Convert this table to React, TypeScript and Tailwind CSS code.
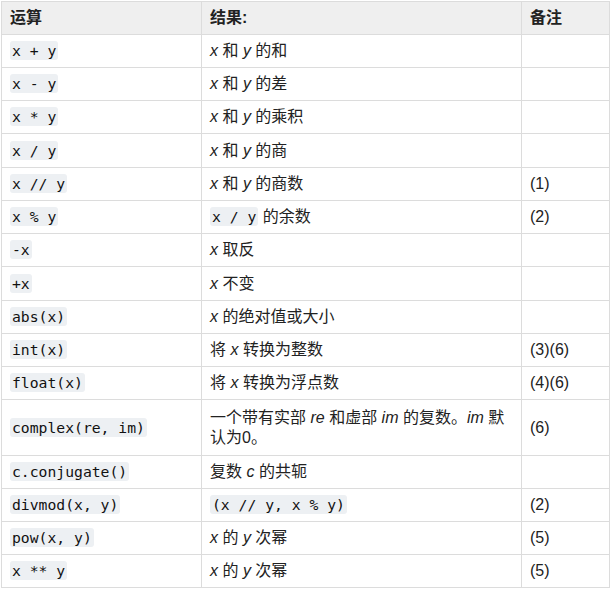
import React from "react";

const C = ({ children }: { children: React.ReactNode }) => (
  <code
    className="bg-[#edf0f3] rounded-[3px] px-[2px] py-px text-[14.72px] text-[#111]"
    style={{ fontFamily: '"DejaVu Sans Mono", monospace' }}
  >
    {children}
  </code>
);

const I = ({ children }: { children: React.ReactNode }) => <i>{children}</i>;

type Row = { op: React.ReactNode; res: React.ReactNode; note?: string; h?: string };

const rows: Row[] = [
  { op: <C>x + y</C>, res: <><I>x</I> 和 <I>y</I> 的和</> },
  { op: <C>x - y</C>, res: <><I>x</I> 和 <I>y</I> 的差</> },
  { op: <C>x * y</C>, res: <><I>x</I> 和 <I>y</I> 的乘积</> },
  { op: <C>x / y</C>, res: <><I>x</I> 和 <I>y</I> 的商</>, h: "h-[33px]" },
  { op: <C>x // y</C>, res: <><I>x</I> 和 <I>y</I> 的商数</>, note: "(1)" },
  { op: <C>x % y</C>, res: <><C>x / y</C> 的余数</>, note: "(2)" },
  { op: <C>-x</C>, res: <><I>x</I> 取反</> },
  { op: <C>+x</C>, res: <><I>x</I> 不变</>, h: "h-[33px]" },
  { op: <C>abs(x)</C>, res: <><I>x</I> 的绝对值或大小</> },
  { op: <C>int(x)</C>, res: <>将 <I>x</I> 转换为整数</>, note: "(3)(6)" },
  { op: <C>float(x)</C>, res: <>将 <I>x</I> 转换为浮点数</>, note: "(4)(6)" },
  {
    op: <C>complex(re, im)</C>,
    res: (
      <>
        一个带有实部 <I>re</I> 和虚部 <I>im</I> 的复数。<I>im</I> 默
        <br />
        认为0。
      </>
    ),
    note: "(6)",
    h: "h-[55px]",
  },
  { op: <C>c.conjugate()</C>, res: <>复数 <I>c</I> 的共轭</> },
  { op: <C>divmod(x, y)</C>, res: <C>(x // y, x % y)</C>, note: "(2)" },
  { op: <C>pow(x, y)</C>, res: <><I>x</I> 的 <I>y</I> 次幂</>, note: "(5)" },
  { op: <C>x ** y</C>, res: <><I>x</I> 的 <I>y</I> 次幂</>, note: "(5)" },
];

export default function App() {
  return (
    <div
      className="bg-white pl-px pt-px min-h-[589px] text-[16px] text-[#222]"
      style={{ fontFamily: '"Liberation Sans", "Noto Sans CJK SC", sans-serif' }}
    >
      <div className="grid grid-cols-[199px_319px_87px] gap-px bg-[#dcdcdc] border border-[#dcdcdc] w-[609px]">
        {["运算", "结果:", "备注"].map((t) => (
          <div key={t} className="bg-[#efefef] h-[32px] px-2 flex items-center font-bold leading-[20px]">
            {t}
          </div>
        ))}
        {rows.map((r, i) => (
          <React.Fragment key={i}>
            <div className={`bg-white px-2 flex items-center leading-[20px] ${r.h ?? "h-[32px]"}`}>
              <span>{r.op}</span>
            </div>
            <div className={`bg-white px-2 flex items-center leading-[20px] ${r.h ?? "h-[32px]"}`}>
              <span>{r.res}</span>
            </div>
            <div className={`bg-white px-2 flex items-center leading-[20px] ${r.h ?? "h-[32px]"}`}>
              <span>{r.note ?? ""}</span>
            </div>
          </React.Fragment>
        ))}
      </div>
    </div>
  );
}
